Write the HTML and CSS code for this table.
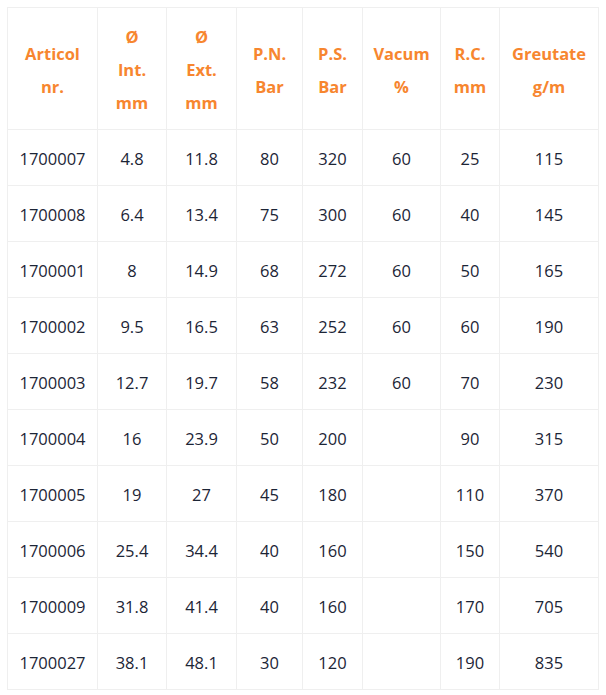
FILE: index.html
```html
<!DOCTYPE html>
<html>
<head>
<meta charset="utf-8">
<link rel="stylesheet" href="styles.css">
</head>
<body>
<table class="specs">
  <colgroup>
    <col class="c1"><col class="c2"><col class="c3"><col class="c4"><col class="c5"><col class="c6"><col class="c7"><col class="c8">
  </colgroup>
  <thead>
    <tr>
      <th>Articol<br>nr.</th>
      <th>Ø<br>Int.<br>mm</th>
      <th>Ø<br>Ext.<br>mm</th>
      <th>P.N.<br>Bar</th>
      <th>P.S.<br>Bar</th>
      <th>Vacum<br>%</th>
      <th>R.C.<br>mm</th>
      <th>Greutate<br>g/m</th>
    </tr>
  </thead>
  <tbody>
    <tr><td>1700007</td><td>4.8</td><td>11.8</td><td>80</td><td>320</td><td>60</td><td>25</td><td>115</td></tr>
    <tr><td>1700008</td><td>6.4</td><td>13.4</td><td>75</td><td>300</td><td>60</td><td>40</td><td>145</td></tr>
    <tr><td>1700001</td><td>8</td><td>14.9</td><td>68</td><td>272</td><td>60</td><td>50</td><td>165</td></tr>
    <tr><td>1700002</td><td>9.5</td><td>16.5</td><td>63</td><td>252</td><td>60</td><td>60</td><td>190</td></tr>
    <tr><td>1700003</td><td>12.7</td><td>19.7</td><td>58</td><td>232</td><td>60</td><td>70</td><td>230</td></tr>
    <tr><td>1700004</td><td>16</td><td>23.9</td><td>50</td><td>200</td><td></td><td>90</td><td>315</td></tr>
    <tr><td>1700005</td><td>19</td><td>27</td><td>45</td><td>180</td><td></td><td>110</td><td>370</td></tr>
    <tr><td>1700006</td><td>25.4</td><td>34.4</td><td>40</td><td>160</td><td></td><td>150</td><td>540</td></tr>
    <tr><td>1700009</td><td>31.8</td><td>41.4</td><td>40</td><td>160</td><td></td><td>170</td><td>705</td></tr>
    <tr><td>1700027</td><td>38.1</td><td>48.1</td><td>30</td><td>120</td><td></td><td>190</td><td>835</td></tr>
  </tbody>
</table>
</body>
</html>
```
FILE: styles.css
```css
html, body {
  margin: 0;
  padding: 0;
  background: #fff;
}
body {
  padding: 7px 0 0 7px;
  font-family: "Open Sans", sans-serif;
  font-size: 16.5px;
  color: #1c2536;
}
.specs {
  border-collapse: collapse;
  table-layout: fixed;
  width: 592px;
}
.c1 { width: 90px; }
.c2 { width: 69px; }
.c3 { width: 70px; }
.c4 { width: 66px; }
.c5 { width: 60px; }
.c6 { width: 78px; }
.c7 { width: 59px; }
.c8 { width: 99px; }
.specs th,
.specs td {
  border: 1px solid #efefef;
  text-align: center;
  vertical-align: middle;
  line-height: 33px;
  padding: 12px 0 10px;
}
.specs th {
  color: #f7862f;
  font-weight: 700;
}
.specs td {
  font-weight: 400;
}
```
